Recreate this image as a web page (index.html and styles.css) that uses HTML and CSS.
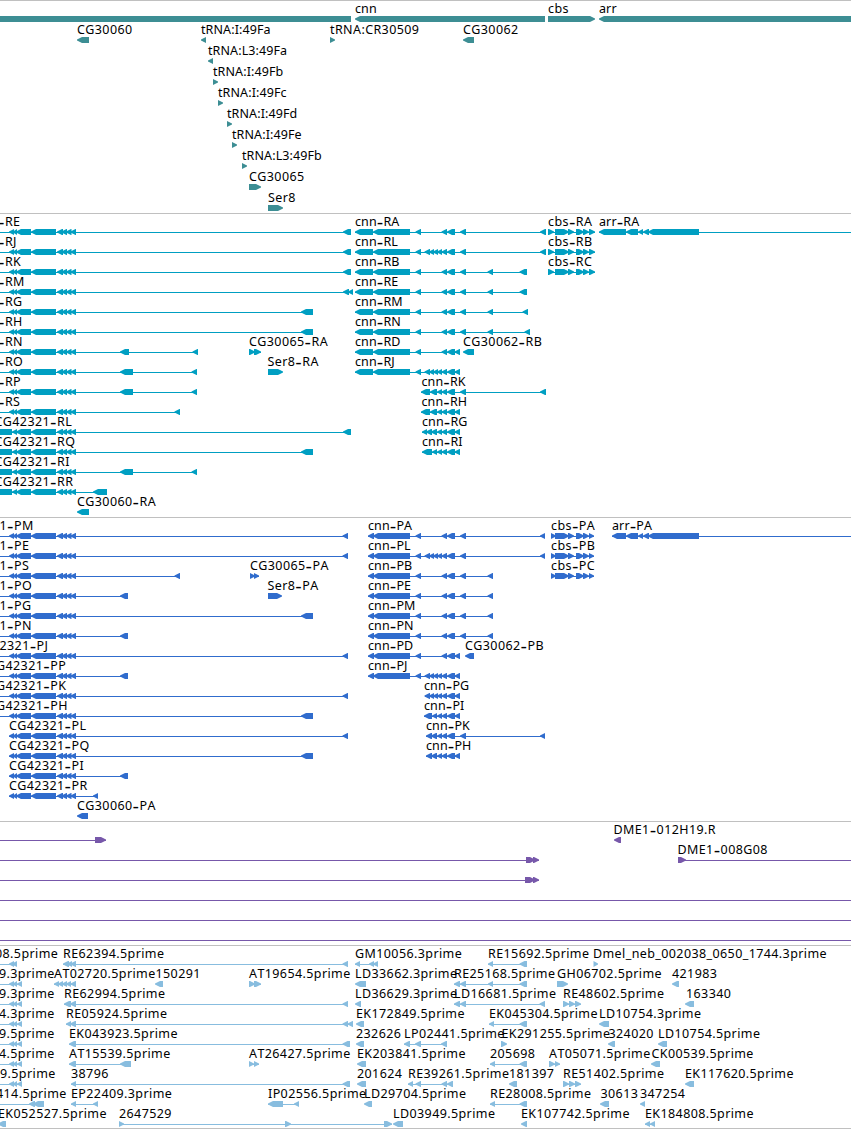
FILE: index.html
```
<!DOCTYPE html>
<html lang="en">
<head>
  <meta charset="UTF-8">
  <title>Genome Map</title>
  <link rel="stylesheet" href="styles.css">
</head>
<body>

<main class="map">
  <section class="track genes"><svg id="genes"></svg></section>
  <section class="track transcripts"><svg id="transcripts"></svg></section>
  <section class="track cds"><svg id="cds"></svg></section>
  <section class="track bac"><svg id="bac"></svg></section>
  <section class="track est"><svg id="est"></svg></section>
</main>

<script src="map.js"></script>
</body>
</html>
```
FILE: styles.css
```
body {
  margin: 0;
  background-color: #fff;
  font-family: "Noto Sans", sans-serif;
}
.map {
  display: flex;
  flex-direction: column;
  width: 851px;
  border-bottom: 1px solid #c0c0c0;
  overflow: hidden;
}
.track {
  box-sizing: border-box;
  border-top: 1px solid #c0c0c0;
}
.track svg {
  display: block;
  width: 100%;
  height: 100%;
}
.genes {
  height: 213px;
  color: #3d8e94;
}
.transcripts {
  height: 304px;
  color: #009fc2;
}
.cds {
  height: 304px;
  color: #306ccd;
}
.bac {
  height: 124px;
  color: #7758aa;
}
.est {
  height: 183px;
  color: #88bddf;
}
.label {
  font-size: 12.5px;
  fill: #000;
  font-kerning: none;
  letter-spacing: 0.4px;
}
.label.tight {
  letter-spacing: 0.1px;
}
.dash {
  font-family: "DejaVu Sans", sans-serif;
  font-size: 18px;
}
.exon, .line {
  fill: currentColor;
}
.line {
  shape-rendering: crispEdges;
}
```
FILE: map.js
```
const NS = 'http://www.w3.org/2000/svg';

// feature: [row, label, label x, direction, exons, line start, line end]
const tail = '9-14 13-17 16-31 31-56 57-63 61.5-67 66-71.5 70.5-76';
const tailLong = '-5-12 12-17 16-31 31-56 57-63 61.5-67 66-71.5 70.5-76';
const cnnR = '355-373 373-410 415.5-421 ';
const cnnP = '368-374 373-410 415.5-421 ';
const mid = '441.5-447 447-455 ';
const many = '424.5-430 429-434 433-438 437-442 441.5-447 447-455 ';
const few = '430-437 437-442 441.5-447 447-455 ';
const cbs = '555-569 568-574 576-584 583-589 589-';
const arr = '626-638 638-643 643-649 648-699';

const genes = [
  [0, '', 0, 'B', '0-351'],
  [0, 'cnn', 355, 'L', '355-545'],
  [0, 'cbs', 548, 'R', '548-595'],
  [0, 'arr', 599, 'L', '599-851'],
  [1, 'CG30060', 77, 'L', '77-89'],
  [1, 'tRNA:I:49Fa', 201, 'L', '201-206'],
  [1, 'tRNA:CR30509', 330, 'R', '330-335'],
  [1, 'CG30062', 463, 'L', '463-474'],
  [2, 'tRNA:L3:49Fa', 208, 'L', '208-213'],
  [3, 'tRNA:I:49Fb', 213, 'R', '213-218'],
  [4, 'tRNA:I:49Fc', 218, 'R', '218-223'],
  [5, 'tRNA:I:49Fd', 227, 'R', '227-232'],
  [6, 'tRNA:I:49Fe', 232, 'R', '232-237'],
  [7, 'tRNA:L3:49Fb', 242, 'R', '242-247'],
  [8, 'CG30065', 249, 'R', '249-261'],
  [9, 'Ser8', 268, 'R', '268-283']
];

const transcripts = [
  [0, '-RE', -2, 'L', tail + ' 343-351', 0],
  [1, '-RJ', -2, 'L', tail + ' 343-351', 0],
  [2, '-RK', -2, 'L', tail + ' 343-351', 0],
  [3, '-RM', -2, 'L', tail + ' 343-349 348-353', 0],
  [4, '-RG', -2, 'L', tail + ' 301-313', 0],
  [5, '-RH', -2, 'L', tail + ' 301-313', 0],
  [6, '-RN', -2, 'L', tail + ' 120-129 192.5-198', 0],
  [7, '-RO', -2, 'L', tail + ' 120-133 191.5-197', 0],
  [8, '-RP', -2, 'L', tail + ' 120-133 191.5-197', 0],
  [9, '-RS', -2, 'L', tail + ' 174.5-180', 0],
  [10, 'CG42321-RL', -5.5, 'L', tailLong + ' 343-351'],
  [11, 'CG42321-RQ', -5.5, 'L', tailLong + ' 301-313'],
  [12, 'CG42321-RI', -5.5, 'L', tailLong + ' 120-133 191.5-197'],
  [13, 'CG42321-RR', -5.5, 'L', tailLong + ' 93-107'],
  [14, 'CG30060-RA', 77, 'L', '77-89'],
  [6, 'CG30065-RA', 249, 'R', '249-255 254-261'],
  [7, 'Ser8-RA', 267.5, 'R', '268-283'],
  [0, 'cnn-RA', 355, 'L', cnnR + mid + '460-466 540-546'],
  [1, 'cnn-RL', 355, 'L', cnnR + many + '460-466 540-546'],
  [2, 'cnn-RB', 355, 'L', cnnR + mid + '460-466 487.5-493 519.5-527'],
  [3, 'cnn-RE', 355, 'L', cnnR + mid + '460-466 487.5-493 519.5-527'],
  [4, 'cnn-RM', 355, 'L', cnnR + mid + '460-466 487.5-493 522.5-528'],
  [5, 'cnn-RN', 355, 'L', cnnR + mid + '460-466 487.5-493 524.5-530'],
  [6, 'cnn-RD', 355, 'L', cnnR + mid + '454.5-460'],
  [7, 'cnn-RJ', 355, 'L', cnnR + many + '454.5-460'],
  [8, 'cnn-RK', 421.5, 'L', '421-430 ' + few + '460-466 540-546'],
  [9, 'cnn-RH', 421.5, 'L', '421-430 ' + few + '454.5-460'],
  [10, 'cnn-RG', 422, 'L', '422-427 426-432 431-437 ' + few.slice(8) + '454.5-460'],
  [11, 'cnn-RI', 422, 'L', '422-432 432-437 ' + few.slice(8) + '454.5-460'],
  [6, 'CG30062-RB', 463, 'L', '463-474'],
  [0, 'cbs-RA', 548, 'R', '548-554 ' + cbs + '595'],
  [1, 'cbs-RB', 548, 'R', '548-554 ' + cbs + '595'],
  [2, 'cbs-RC', 548, 'R', '548-554 ' + cbs + '595'],
  [0, 'arr-RA', 599, 'L', '599-626 ' + arr, 599, 851]
];

const cds = [
  [0, '1-PM', -0.5, 'L', tail + ' 342.5-348', 0],
  [1, '1-PE', -0.5, 'L', tail + ' 342.5-348', 0],
  [2, '1-PS', -0.5, 'L', tail + ' 174.5-180', 0],
  [3, '1-PO', -0.5, 'L', tail + ' 120-128', 0],
  [4, '1-PG', -0.5, 'L', tail + ' 301-313', 0],
  [5, '1-PN', -0.5, 'L', tail + ' 120-128', 0],
  [6, '2321-PJ', -0.5, 'L', tail + ' 342.5-348', 0],
  [7, 'G42321-PP', -4, 'L', tail + ' 120-128', 0],
  [8, 'G42321-PK', -4, 'L', tail + ' 342.5-348', 0],
  [9, 'G42321-PH', -4, 'L', tail + ' 301-313', 0],
  [10, 'CG42321-PL', 9, 'L', tail + ' 342.5-348'],
  [11, 'CG42321-PQ', 9, 'L', tail + ' 301-313'],
  [12, 'CG42321-PI', 9, 'L', tail + ' 120-128'],
  [13, 'CG42321-PR', 9, 'L', tail + ' 93-98'],
  [14, 'CG30060-PA', 77, 'L', '77-88'],
  [2, 'CG30065-PA', 250, 'R', '250-255 254-259'],
  [3, 'Ser8-PA', 267.5, 'R', '268-282'],
  [0, 'cnn-PA', 368, 'L', cnnP + mid + '460-466 540-545'],
  [1, 'cnn-PL', 368, 'L', cnnP + many + '460-466 540-545'],
  [2, 'cnn-PB', 368, 'L', cnnP + mid + '460-466 487.5-493'],
  [3, 'cnn-PE', 368, 'L', cnnP + mid + '460-466 487.5-493'],
  [4, 'cnn-PM', 368, 'L', cnnP + mid + '460-466 487.5-493'],
  [5, 'cnn-PN', 368, 'L', cnnP + mid + '460-466 487.5-493'],
  [6, 'cnn-PD', 368, 'L', cnnP + mid + '454.5-460'],
  [7, 'cnn-PJ', 368, 'L', cnnP + many + '454.5-460'],
  [8, 'cnn-PG', 424, 'L', many + '454.5-460'],
  [9, 'cnn-PI', 424, 'L', '424-432 432-437 ' + few.slice(8) + '454.5-460'],
  [10, 'cnn-PK', 426, 'L', '426-432 431-437 ' + few.slice(8) + '460-466 540-545'],
  [11, 'cnn-PH', 426, 'L', '426-432 431-437 ' + few.slice(8) + '454.5-460'],
  [6, 'CG30062-PB', 465, 'L', '465-474'],
  [0, 'cbs-PA', 551, 'R', '551-556 ' + cbs + '594'],
  [1, 'cbs-PB', 551, 'R', '551-556 ' + cbs + '594'],
  [2, 'cbs-PC', 551, 'R', '551-556 ' + cbs + '594'],
  [0, 'arr-PA', 612, 'L', '612-626 ' + arr, 612, 851]
];

const bac = [
  [0, '', 0, 'R', '95-106', 0],
  [0, 'DME1-012H19.R', 613.5, 'L', '614-621'],
  [1, '', 0, 'R', '526-535 533-539', 0],
  [1, 'DME1-008G08', 677.5, 'R', '678-686', 678, 851],
  [2, '', 0, 'R', '525-535 533-539', 0],
  [3, '', 0, 'R', '', 0, 851],
  [4, '', 0, 'R', '', 0, 851],
  [5, '', 0, 'R', '', 0, 851]
];

const est = [
  [0, '08.5prime', -5, 'L', '9-14 12-17', 0],
  [0, 'RE62394.5prime', 63, 'L', '63-69 67-72 70.5-76 342.5-348'],
  [0, 'GM10056.3prime', 355, 'L', '355-360 369-374 373-378'],
  [0, 'RE15692.5prime', 488, 'L', '488-493 519.5-527'],
  [0, 'Dmel_neb_002038_0650_1744.3prime', 593, 'R', '593.5-598'],
  [1, '9.3prime', -1, 'L', '9-14 13-17 17-22', 0],
  [1, 'AT02720.5prime', 54, 'L', '54-59 58-63 62-67 66-71 70.5-76'],
  [1, '150291', 155.5, 'L', '155-163'],
  [1, 'AT19654.5prime', 249, 'R', '249-255 254-261'],
  [1, 'LD33662.3prime', 355, 'L', '355-366'],
  [1, 'RE25168.5prime', 454, 'L', '454-460 460-466 488-493 519.5-527'],
  [1, 'GH06702.5prime', 557, 'R', '557-568'],
  [1, '421983', 672, 'L', '672-679'],
  [2, '9.3prime', -1, 'L', '9-14 13-17 17-22', 0],
  [2, 'RE62994.5prime', 64, 'L', '64-71 70-76 342.5-348'],
  [2, 'LD36629.3prime', 355, 'L', '355-361'],
  [2, 'LD16681.5prime', 454, 'L', '454-460 460-466 539.5-545'],
  [2, 'RE48602.5prime', 563, 'R', '563-569 569-575 575-581'],
  [2, '163340', 686, 'L', '685-694'],
  [3, '4.3prime', -1, 'L', '9-14 13-17 17-22', 0],
  [3, 'RE05924.5prime', 66, 'L', '66-71 70-76 342.5-348 347.5-353'],
  [3, 'EK172849.5prime', 356, 'L', '356-364'],
  [3, 'EK045304.5prime', 489, 'L', '489-494 519.5-527'],
  [3, 'LD10754.3prime', 599, 'L', '599-609'],
  [4, '9.5prime', -1, 'L', '9-14 13-17 17-22', 0],
  [4, 'EK043923.5prime', 69, 'L', '69-76 342.5-350'],
  [4, '232626', 356, 'L', '356-364'],
  [4, 'LP02441.5prime', 404, 'L', '404-410 415-421 441-447'],
  [4, 'EK291255.5prime', 501.5, 'R', '501-507'],
  [4, '324020', 608.5, 'L', '608-615'],
  [4, 'LD10754.5prime', 658, 'L', '658-667'],
  [5, '4.5prime', -1, 'L', '9-14 13-17 17-22', 0],
  [5, 'AT15539.5prime', 69, 'L', '69-76 120-131'],
  [5, 'AT26427.5prime', 249, 'R', '249-254 254-259'],
  [5, 'EK203841.5prime', 357, 'L', '357-366'],
  [5, '205698', 490, 'L', '490-495 519.5-527'],
  [5, 'AT05071.5prime', 549, 'R', '549-555 555-560'],
  [5, 'CK00539.5prime', 651.5, 'L', '651-660'],
  [6, '9.5prime', 0, 'L', '9-14 13-17 17-22', 0],
  [6, '38796', 71, 'L', '71-76 342.5-350'],
  [6, '201624', 357, 'L', '357-366'],
  [6, 'RE39261.5prime', 408, 'L', '408-413 415.5-421 441.5-447 447-453'],
  [6, '181397', 509, 'L', '509-517'],
  [6, 'RE51402.5prime', 563, 'R', '563-569 569-575 575-581'],
  [6, 'EK117620.5prime', 685, 'L', '685-694'],
  [7, '414.5prime', -4, 'L', '29-35 33-44', 0],
  [7, 'EP22409.3prime', 71, 'L', '71-76 93-98'],
  [7, 'IP02556.5prime', 268, 'L', '268-283 294-299'],
  [7, 'LD29704.5prime', 364, 'L', '364-372'],
  [7, 'RE28008.5prime', 490, 'L', '490-495 519.5-527'],
  [7, '30613', 600.5, 'L', '600-609'],
  [7, '347254', 640, 'L', '640-645'],
  [8, 'EK052527.5prime', -2, 'L', '-2-6'],
  [8, '2647529', 119, 'R', '119-124 285-291 384-392'],
  [8, 'LD03949.5prime', 393, 'L', '393-403'],
  [8, 'EK107742.5prime', 521, 'L', '521-527'],
  [8, 'EK184808.5prime', 645, 'L', '645-650 650-655']
];

function add(parent, name, attrs) {
  const el = document.createElementNS(NS, name);
  for (const key in attrs) el.setAttribute(key, attrs[key]);
  parent.appendChild(el);
  return el;
}

function exonPoints(a, b, y, dir) {
  const w = Math.min(5, b - a);
  if (dir === 'L') return `${a},${y + 2.5} ${a + w},${y} ${b},${y} ${b},${y + 6} ${a + w},${y + 6} ${a},${y + 3.5}`;
  if (dir === 'R') return `${a},${y} ${b - w},${y} ${b},${y + 2.5} ${b},${y + 3.5} ${b - w},${y + 6} ${a},${y + 6}`;
  return `${a},${y} ${b},${y} ${b},${y + 6} ${a},${y + 6}`;
}

function drawTrack(id, features, rowHeight) {
  const svg = document.getElementById(id);
  features.forEach(([row, label, x, dir, exonText, from, to]) => {
    const y = 15 + row * rowHeight;
    const exons = [...exonText.matchAll(/(-?[\d.]+)-([\d.]+)/g)].map(m => [+m[1], +m[2]]);
    const start = from === undefined ? exons[0][0] : from;
    const end = to === undefined ? exons[exons.length - 1][1] : to;
    if (exons.length !== 1 || from !== undefined) {
      add(svg, 'rect', { class: 'line', x: start, y: y + 3, width: end - start, height: 1 });
    }
    exons.forEach(([a, b]) => add(svg, 'polygon', { class: 'exon', points: exonPoints(a, b, y, dir) }));

    if (!label) return;
    const tight = /^(cnn|arr|tRNA:I|tRNA:L)/.test(label);
    const text = add(svg, 'text', { class: tight ? 'label tight' : 'label', x: x, y: y - 3 });
    // hyphens are drawn wide, so they are lowered back to mid-height
    let shift = 0;
    label.split(/(-)/).forEach(part => {
      if (!part) return;
      const dash = part === '-';
      const span = add(text, 'tspan', dash ? { class: 'dash', dy: 2 } : { dy: shift });
      span.textContent = part;
      shift = dash ? -2 : 0;
    });
  });
}

drawTrack('genes', genes, 21);
drawTrack('transcripts', transcripts, 20);
drawTrack('cds', cds, 20);
drawTrack('bac', bac, 20);
drawTrack('est', est, 20);
```
